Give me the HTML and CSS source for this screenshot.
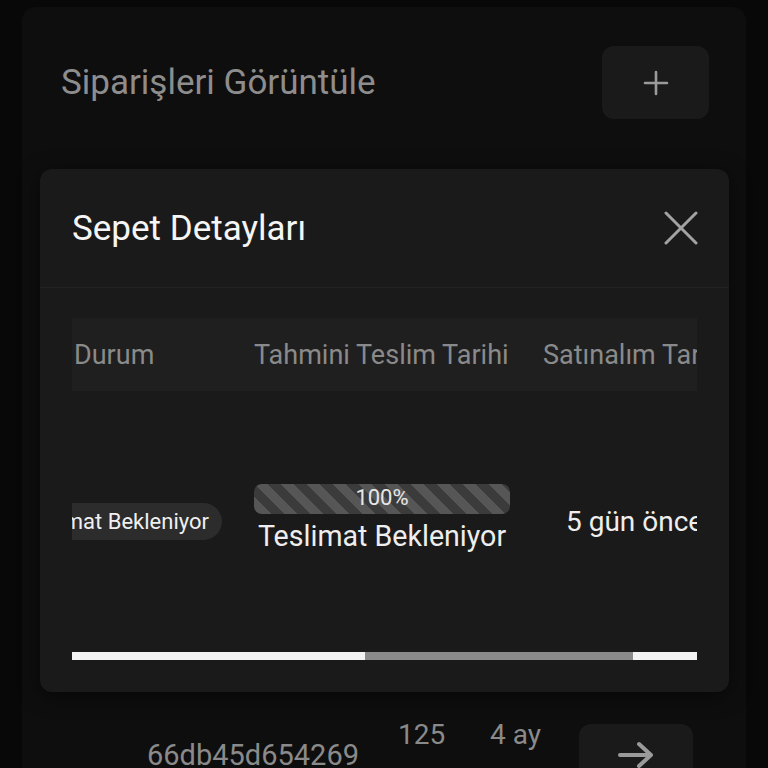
FILE: index.html
```html
<!DOCTYPE html>
<html lang="tr">
<head>
<meta charset="utf-8">
<title>Sepet Detayları</title>
<link rel="stylesheet" href="styles.css">
</head>
<body>
<div class="page">
  <div class="top">
    <h1 class="page-title">Siparişleri Görüntüle</h1>
    <button class="icon-btn add-btn" aria-label="Ekle">
      <svg width="26" height="26" viewBox="0 0 26 26"><path d="M13 2v22M2 13h22" stroke="#9a9a9a" stroke-width="2.6" stroke-linecap="round" fill="none"/></svg>
    </button>
  </div>

  <div class="modal">
    <div class="modal-head">
      <h2 class="modal-title">Sepet Detayları</h2>
      <svg class="close" width="34" height="34" viewBox="0 0 34 34"><path d="M2 2L32 32M32 2L2 32" stroke="#a3a3a3" stroke-width="3" stroke-linecap="round" fill="none"/></svg>
    </div>
    <div class="modal-body">
      <div class="table-view">
        <div class="trow thead">
          <div class="cell c1">Durum</div>
          <div class="cell c2">Tahmini Teslim Tarihi</div>
          <div class="cell c3">Satınalım Tarihi</div>
        </div>
        <div class="trow tbody">
          <div class="cell c1 status-cell"><span class="pill">Teslimat Bekleniyor</span></div>
          <div class="cell c2 eta-cell">
            <div class="bar"><span>100%</span></div>
            <div class="eta-label">Teslimat Bekleniyor</div>
          </div>
          <div class="cell c3 date-cell">5 gün önce</div>
        </div>
      </div>
      <div class="scrollbar"><div class="thumb"></div></div>
    </div>
  </div>

  <div class="order-row">
    <div class="oid">66db45d654269</div>
    <div class="ocol"><div>125</div><div class="second">adet</div></div>
    <div class="ocol"><div>4 ay</div><div class="second">önce</div></div>
    <button class="icon-btn go-btn" aria-label="Git">
      <svg width="38" height="30" viewBox="0 0 38 30"><path d="M3 15H34M22 4L34 15L22 26" stroke="#9a9a9a" stroke-width="4" stroke-linecap="round" stroke-linejoin="round" fill="none"/></svg>
    </button>
  </div>
</div>
</body>
</html>
```

FILE: styles.css
```css
* { box-sizing: border-box; }
html, body { margin: 0; padding: 0; }
body {
  background: #080808;
  height: 768px;
  overflow: hidden;
  font-family: Roboto, "Noto Sans", "Liberation Sans", sans-serif;
}
.page {
  margin: 7px 22px 0;
  background: #0e0e0e;
  border-radius: 14px;
  height: 900px;
  padding: 39px 37px 0 18px;
}
.top {
  display: flex;
  justify-content: space-between;
  align-items: center;
  padding-left: 21px;
}
.page-title {
  margin: 0;
  font-size: 35px;
  font-weight: 400;
  color: #8d8d8d;
}
.icon-btn {
  border: 0;
  background: #1a1a1a;
  border-radius: 12px;
  display: flex;
  align-items: center;
  justify-content: center;
  padding: 0;
}
.add-btn { width: 107px; height: 73px; }

.modal {
  margin-top: 50px;
  margin-right: -20px;
  background: #1a1a1a;
  border-radius: 12px;
  height: 523px;
  box-shadow: 0 4px 20px rgba(0,0,0,0.5);
}
.modal-head {
  height: 119px;
  display: flex;
  justify-content: space-between;
  align-items: center;
  padding: 0 31px 0 32px;
  border-bottom: 1px solid #222222;
}
.modal-title {
  margin: 0;
  font-size: 35px;
  font-weight: 400;
  color: #f5f5f5;
}
.modal-body { padding: 30px 32px 0; }
.table-view { overflow: hidden; width: 625px; }
.trow { display: grid; grid-template-columns: 180px 289px 300px; width: 769px; }
.thead {
  background: #1f1f1f;
  height: 73px;
  align-items: center;
  color: #8a8a8a;
  font-size: 27px;
}
.thead .cell { padding-left: 2px; white-space: nowrap; }
.tbody {
  height: 261px;
  align-items: center;
  color: #eeeeee;
}
.status-cell {
  display: flex;
  justify-content: flex-end;
  padding-right: 30px;
}
.pill {
  white-space: nowrap;
  background: #2c2c2c;
  border-radius: 19px;
  height: 37px;
  line-height: 37px;
  padding: 0 13px 0 16px;
  font-size: 22px;
  color: #f0f0f0;
}
.eta-cell { display: flex; flex-direction: column; align-items: center; width: 256px; margin-left: 2px; }
.bar {
  width: 256px;
  height: 30px;
  border-radius: 8px;
  background-color: #3b3b3b;
  background-image: linear-gradient(45deg, #565656 25%, transparent 25%, transparent 50%, #565656 50%, #565656 75%, transparent 75%, transparent);
  background-size: 26px 26px;
  text-align: center;
  font-size: 22px;
  line-height: 28px;
  color: #e6e6e6;
}
.eta-label { font-size: 28.6px; line-height: 45px; white-space: nowrap; }
.date-cell { font-size: 28px; padding-left: 25px; white-space: nowrap; }

.scrollbar {
  width: 625px;
  height: 8px;
  background: #f2f2f2;
  position: relative;
}
.thumb {
  position: absolute;
  left: 293px;
  width: 268px;
  top: 0;
  bottom: 0;
  background: #8a8a8a;
}

.order-row {
  margin-top: 23px;
  padding-left: 107px;
  display: grid;
  grid-template-columns: 251px 92px 89px 114px;
  align-items: center;
  color: #8a8a8a;
  font-size: 28px;
}
.oid { font-size: 29px; }
.ocol { height: 80px; }
.ocol div { line-height: 40px; }
.ocol .second { margin-top: 7px; }
.go-btn { width: 114px; height: 62px; }
```
